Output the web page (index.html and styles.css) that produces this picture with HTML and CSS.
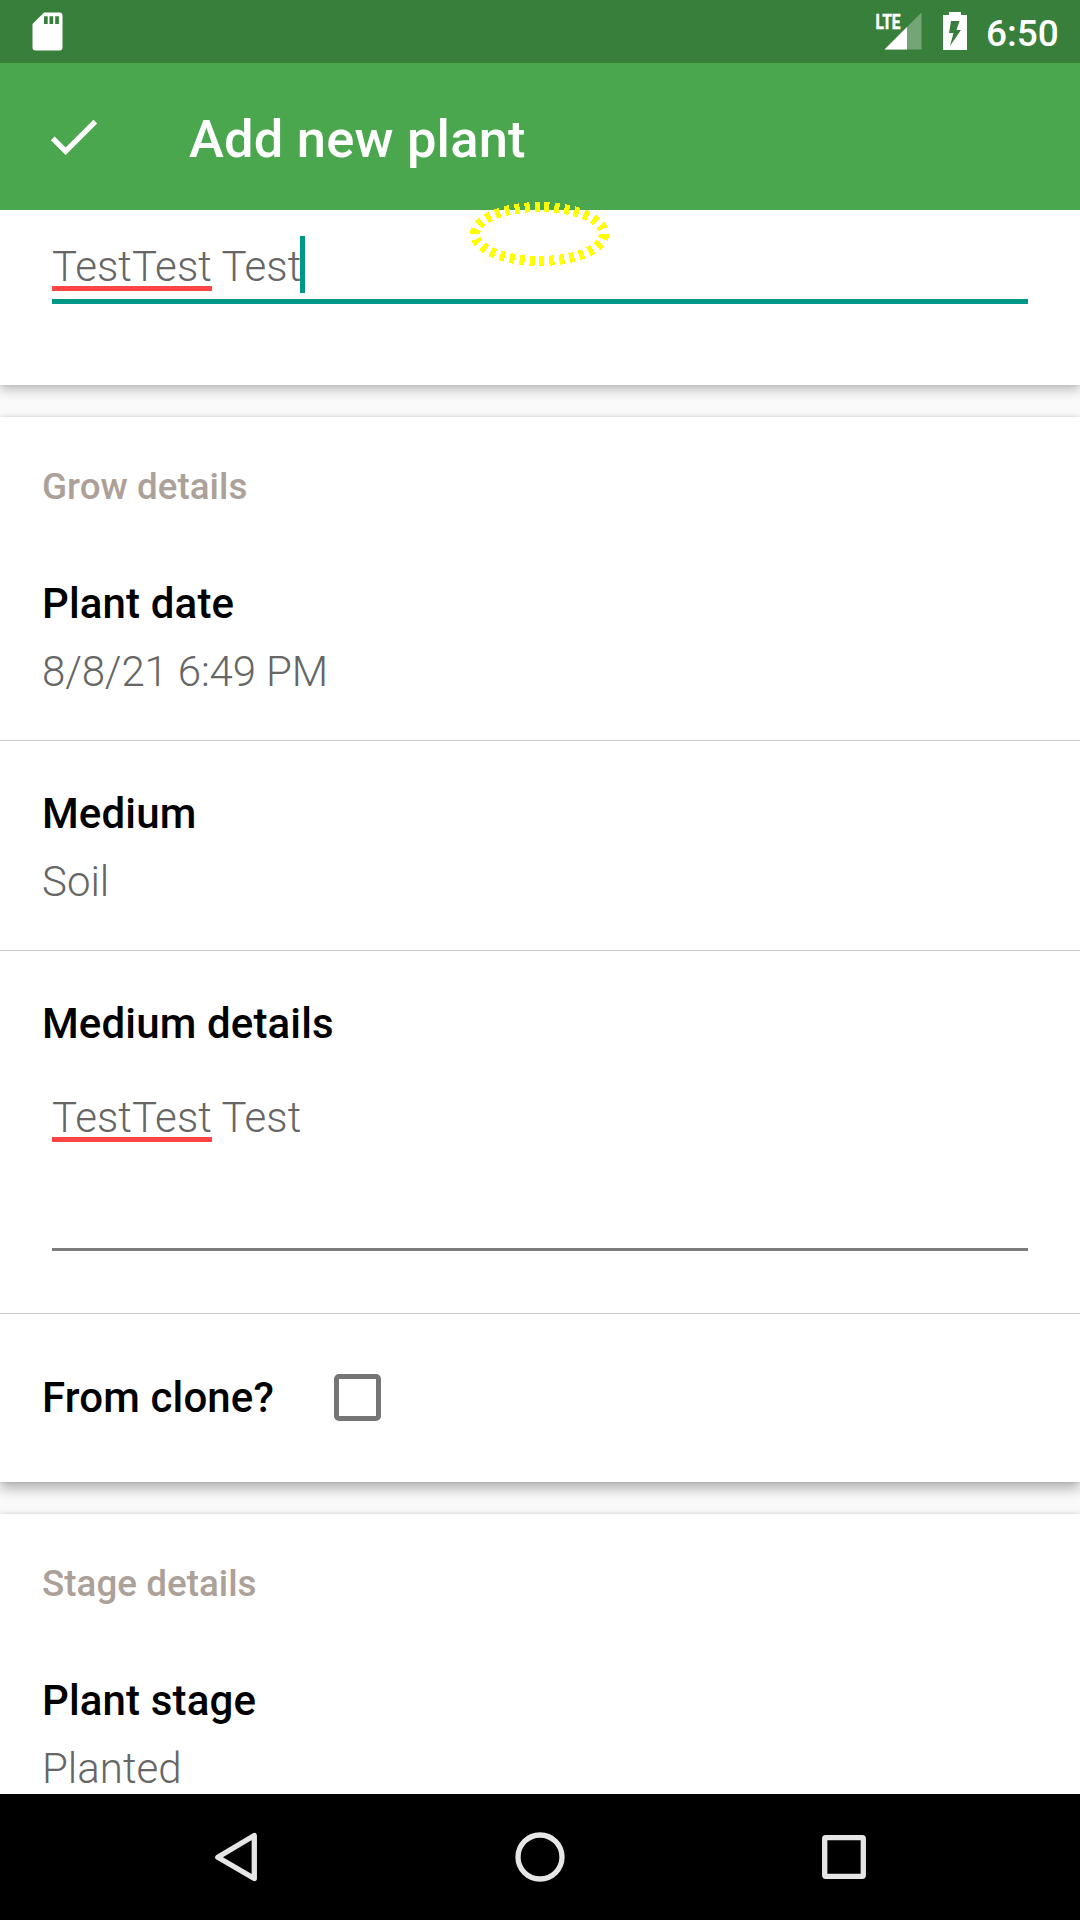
FILE: index.html
```html
<!DOCTYPE html>
<html lang="en">
<head>
<meta charset="utf-8">
<title>Add new plant</title>
<link rel="stylesheet" href="styles.css">
</head>
<body>
<div class="screen">
  <header class="status">
    <svg class="sd-card" width="32" height="40" viewBox="0 0 32 40">
      <path fill="#fff" fill-rule="evenodd" d="M12 .5H27.500a3 3 0 0 1 3 3V35.500a3 3 0 0 1-3 3H3.500a3 3 0 0 1-3-3V12zM12 4.300v7.700h3.700V4.300zM17.500 4.300v7.700h3.700V4.300zM23.200 4.300v7.700h3.700V4.300z"/>
    </svg>
    <div class="status-right">
      <svg class="signal" width="48" height="40" viewBox="0 0 48 40">
        <path fill="#fff" fill-opacity=".3" d="M47.500.500V37.500H10.500z"/>
        <path fill="#fff" d="M33 15V37.500H10.500z"/>
        <text class="lte" x="1.500" y="17" textLength="25" lengthAdjust="spacingAndGlyphs">LTE</text>
      </svg>
      <svg class="battery" width="24" height="38" viewBox="0 0 24 38">
        <path fill="#fff" fill-rule="evenodd" d="M6 0H18V3H24V38H0V3H6zM8 9L6 21H10.500L7 34L18 18H13.500L16.500 9z"/>
      </svg>
      <span class="clock">6:50</span>
    </div>
  </header>

  <div class="app-bar">
    <svg width="63" height="63" viewBox="0 0 24 24"><path fill="#fff" d="M9 16.200L4.800 12l-1.400 1.400L9 19 21 7l-1.400-1.400L9 16.200z"/></svg>
    <h1 class="title">Add new plant</h1>
  </div>

  <main class="content">
    <section class="card card-top">
      <div class="field focused"><span class="misspelled">TestTest</span> Test<i class="caret"></i></div>
    </section>

    <section class="card card-raised">
      <h2 class="section">Grow details</h2>
      <div class="row">
        <div class="label">Plant date</div>
        <div class="value date">8/8/21 6:49 PM</div>
      </div>
      <div class="row">
        <div class="label">Medium</div>
        <div class="value">Soil</div>
      </div>
      <div class="row row-field">
        <div class="label">Medium details</div>
        <div class="field multiline"><span class="misspelled">TestTest</span> Test</div>
      </div>
      <div class="row-check">
        <div class="label">From clone?</div>
        <span class="checkbox"></span>
      </div>
    </section>

    <section class="card">
      <h2 class="section">Stage details</h2>
      <div class="row">
        <div class="label">Plant stage</div>
        <div class="value">Planted</div>
      </div>
    </section>
  </main>

  <nav class="nav">
    <svg width="60" height="60" viewBox="0 0 60 60"><path d="M11.800 30.300L48.300 8.500V51.500z"/></svg>
    <svg width="60" height="60" viewBox="0 0 60 60"><circle cx="30" cy="30" r="22"/></svg>
    <svg width="60" height="60" viewBox="0 0 60 60"><rect x="10.700" y="10.700" width="38.600" height="38.600" rx="1"/></svg>
  </nav>

  <svg class="marker" width="144" height="68" viewBox="0 0 144 68">
    <ellipse cx="71.500" cy="34" rx="64.500" ry="27" pathLength="300"/>
  </svg>
</div>
</body>
</html>
```
FILE: styles.css
```css
* { box-sizing: border-box; }

body {
  margin: 0;
  font-family: Roboto, sans-serif;
  font-size: 42px;
  line-height: 50px;
  color: #000;
}

svg { display: block; flex: none; }

.screen {
  position: relative;
  display: flex;
  flex-direction: column;
  width: 1080px;
  height: 1920px;
  overflow: hidden;
  background: #fafafa;
}

.status {
  display: flex;
  flex: none;
  justify-content: space-between;
  align-items: flex-start;
  height: 63px;
  padding: 12px 22px 0 32px;
  background: #387f3b;
}

.status-right { display: flex; }
.signal { overflow: visible; }
.battery { margin-left: 21px; }

.lte {
  font-family: Roboto, sans-serif;
  font-size: 21px;
  font-weight: 700;
  fill: #fff;
  stroke: #fff;
  stroke-width: .5;
}

.clock {
  width: 72px;
  margin: 0 0 0 19px;
  font-size: 37px;
  font-weight: 500;
  line-height: 44px;
  color: #fff;
}

.app-bar {
  display: flex;
  flex: none;
  align-items: center;
  gap: 84px;
  height: 147px;
  padding-left: 42px;
  background: #4ba74e;
}

.title {
  margin: 4px 0 0;
  font-size: 52.5px;
  font-weight: 500;
  line-height: 62px;
  letter-spacing: .19px;
  color: #fff;
}

.content {
  display: flex;
  flex: 1;
  flex-direction: column;
  gap: 32px;
  min-height: 0;
  overflow: hidden;
}

.card {
  flex: none;
  background: #fff;
  box-shadow: 0 5px 11px rgba(0, 0, 0, .24), 0 0 4px rgba(0, 0, 0, .12);
}

.card-top {
  height: 175px;
  padding: 32px 52px 0;
}

.card-raised { box-shadow: 0 7px 12px rgba(0, 0, 0, .28), 0 0 4px rgba(0, 0, 0, .14); }

.section {
  margin: 0;
  padding: 48px 42px 22px;
  font-size: 36.75px;
  font-weight: 500;
  line-height: 44px;
  letter-spacing: .04px;
  color: #aca199;
}

.row {
  height: 210px;
  padding: 48px 42px 0;
  border-bottom: 1px solid #cacaca;
}

.label {
  font-weight: 500;
  letter-spacing: .14px;
}

.value {
  margin-top: 18px;
  font-weight: 300;
  color: #666;
}

.date { letter-spacing: -.15px; }

.row-field { height: 363px; }

.field {
  display: flex;
  height: 62px;
  font-weight: 300;
  letter-spacing: .09px;
  white-space: pre;
  color: #666;
}

.focused {
  border-bottom: 5px solid #009688;
}

.multiline {
  height: 158px;
  margin: 44px 10px 0;
  border-bottom: 3px solid #7a7d7a;
}

.misspelled {
  height: 49px;
  border-bottom: 5px solid #ff4444;
}

.caret {
  width: 5px;
  height: 57px;
  margin: -6px 0 0 -1px;
  background: #009688;
}

.row-check {
  display: flex;
  align-items: center;
  gap: 60px;
  height: 168px;
  padding-left: 42px;
}

.checkbox {
  width: 47px;
  height: 47px;
  margin-bottom: 1px;
  border: 5px solid #757575;
  border-radius: 5px;
}

.nav {
  display: flex;
  flex: none;
  justify-content: center;
  align-items: center;
  gap: 244px;
  height: 126px;
  background: #000;
}

.nav svg {
  fill: none;
  stroke: #e6e6e6;
  stroke-width: 5.3;
  stroke-linejoin: round;
}

/* touch highlight drawn over the app bar and the first card */
.marker {
  position: absolute;
  left: 468px;
  top: 200px;
  fill: none;
  stroke: #ff0;
  stroke-width: 10;
  stroke-dasharray: 5 5;
  shape-rendering: crispEdges;
}
```
